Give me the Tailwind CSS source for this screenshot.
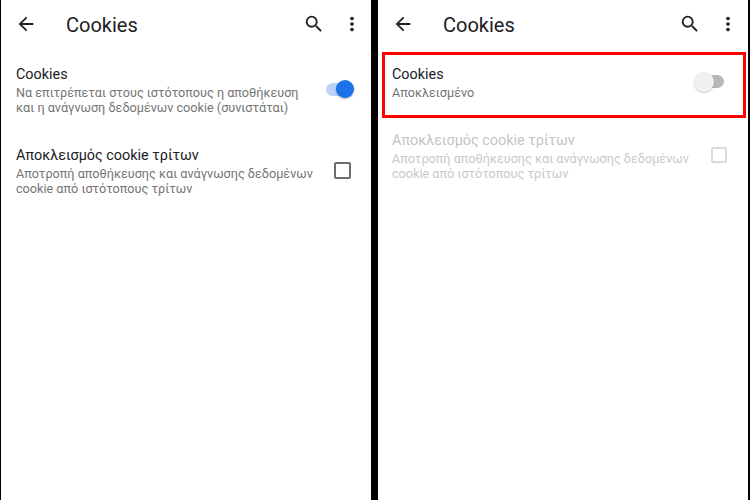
<!DOCTYPE html>
<html lang="el">
<head>
  <meta charset="UTF-8" />
  <title>Cookies</title>
  <script src="https://cdn.jsdelivr.net/npm/@tailwindcss/browser@4"></script>
</head>
<body class="w-[750px] h-[500px] overflow-hidden bg-black font-['Roboto',sans-serif]">
  <div class="flex h-[500px] pl-px pr-[2px] gap-[7px]">
    <!-- Left: cookies allowed -->
    <section class="w-[370px] bg-white">
      <header class="h-[50px] flex items-center pl-[14px] pr-[8px]">
        <svg class="w-[22px] h-[22px] -mt-[2px] text-[#202124]" viewBox="0 0 24 24" fill="currentColor"><path d="M20 11H7.83l5.59-5.59L12 4l-8 8 8 8 1.41-1.41L7.83 13H20v-2z"/></svg>
        <h1 class="ml-[29px] flex-1 text-[20px] text-[#202124]">Cookies</h1>
        <svg class="w-[22px] h-[22px] -mt-[2px] text-[#202124]" viewBox="0 0 24 24" fill="currentColor"><path d="M15.5 14h-.79l-.28-.27A6.47 6.47 0 0 0 16 9.5 6.5 6.5 0 1 0 9.5 16c1.61 0 3.09-.59 4.23-1.57l.27.28v.79l5 4.99L20.49 19l-4.99-5zm-6 0C7.01 14 5 11.99 5 9.5S7.01 5 9.5 5 14 7.01 14 9.5 11.99 14 9.5 14z"/></svg>
        <svg class="ml-[16px] w-[22px] h-[22px] -mt-[2px] text-[#202124]" viewBox="0 0 24 24" fill="currentColor"><path d="M12 8c1.1 0 2-.9 2-2s-.9-2-2-2-2 .9-2 2 .9 2 2 2zm0 2c-1.1 0-2 .9-2 2s.9 2 2 2 2-.9 2-2-.9-2-2-2zm0 6c-1.1 0-2 .9-2 2s.9 2 2 2 2-.9 2-2-.9-2-2-2z"/></svg>
      </header>
      <div class="flex items-start mt-[14px] pl-[15px] pr-[17px]">
        <div class="flex-1">
          <p class="pt-px text-[14.4px] leading-[20px] text-[#202124]">Cookies</p>
          <p class="text-[12.65px] leading-[15px] text-[#757575]">Να επιτρέπεται στους ιστότοπους η αποθήκευση<br />και η ανάγνωση δεδομένων cookie (συνιστάται)</p>
        </div>
        <div class="relative w-[28px] h-[20px] mt-[15px]">
          <div class="absolute left-0 top-[4px] w-[26px] h-[13px] rounded-full bg-[#b9d2f6]"></div>
          <div class="absolute right-0 top-px w-[18px] h-[18px] rounded-full bg-[#1a73e8] shadow-[0_1px_2px_rgba(0,0,0,0.3)]"></div>
        </div>
      </div>
      <div class="flex items-start mt-[30px] pl-[15px] pr-[20px]">
        <div class="flex-1">
          <p class="pt-px text-[14.4px] leading-[20px] text-[#202124]">Αποκλεισμός cookie τρίτων</p>
          <p class="text-[12.65px] leading-[15px] text-[#757575]">Αποτροπή αποθήκευσης και ανάγνωσης δεδομένων<br />cookie από ιστότοπους τρίτων</p>
        </div>
        <div class="w-[17px] h-[17px] mt-[17px] rounded-[2px] border-2 border-[#6e6e6e]"></div>
      </div>
    </section>
    <!-- Right: cookies blocked -->
    <section class="flex-1 bg-white">
      <header class="h-[50px] flex items-center pl-[14px] pr-[9px]">
        <svg class="w-[22px] h-[22px] -mt-[2px] text-[#202124]" viewBox="0 0 24 24" fill="currentColor"><path d="M20 11H7.83l5.59-5.59L12 4l-8 8 8 8 1.41-1.41L7.83 13H20v-2z"/></svg>
        <h1 class="ml-[29px] flex-1 text-[20px] text-[#202124]">Cookies</h1>
        <svg class="w-[22px] h-[22px] -mt-[2px] text-[#202124]" viewBox="0 0 24 24" fill="currentColor"><path d="M15.5 14h-.79l-.28-.27A6.47 6.47 0 0 0 16 9.5 6.5 6.5 0 1 0 9.5 16c1.61 0 3.09-.59 4.23-1.57l.27.28v.79l5 4.99L20.49 19l-4.99-5zm-6 0C7.01 14 5 11.99 5 9.5S7.01 5 9.5 5 14 7.01 14 9.5 11.99 14 9.5 14z"/></svg>
        <svg class="ml-[16px] w-[22px] h-[22px] -mt-[2px] text-[#202124]" viewBox="0 0 24 24" fill="currentColor"><path d="M12 8c1.1 0 2-.9 2-2s-.9-2-2-2-2 .9-2 2 .9 2 2 2zm0 2c-1.1 0-2 .9-2 2s.9 2 2 2 2-.9 2-2-.9-2-2-2zm0 6c-1.1 0-2 .9-2 2s.9 2 2 2 2-.9 2-2-.9-2-2-2z"/></svg>
      </header>
      <div class="flex items-start h-[66px] mt-[2px] ml-[4px] mr-[2px] pt-[9px] pl-[7px] pr-[19px] border-[3px] border-[#ff0000]">
        <div class="flex-1">
          <p class="pt-px text-[14.4px] leading-[20px] text-[#202124]">Cookies</p>
          <p class="text-[12.65px] leading-[15px] text-[#757575]">Αποκλεισμένο</p>
        </div>
        <div class="relative w-[30px] h-[20px] mt-[8px]">
          <div class="absolute right-0 top-[3px] w-[26px] h-[13px] rounded-full bg-[#b8b8b8]"></div>
          <div class="absolute left-0 top-0 w-[20px] h-[20px] rounded-full bg-[#f0f0f0] shadow-[0_1px_2px_rgba(0,0,0,0.2)]"></div>
        </div>
      </div>
      <div class="flex items-start mt-[12px] pl-[14px] pr-[21px]">
        <div class="flex-1">
          <p class="pt-px text-[14.4px] leading-[20px] text-[#c4c4c4]">Αποκλεισμός cookie τρίτων</p>
          <p class="text-[12.65px] leading-[15px] text-[#c9c9c9]">Αποτροπή αποθήκευσης και ανάγνωσης δεδομένων<br />cookie από ιστότοπους τρίτων</p>
        </div>
        <div class="w-[16px] h-[16px] mt-[17px] rounded-[2px] border-2 border-[#d9d9d9]"></div>
      </div>
    </section>
  </div>
</body>
</html>
